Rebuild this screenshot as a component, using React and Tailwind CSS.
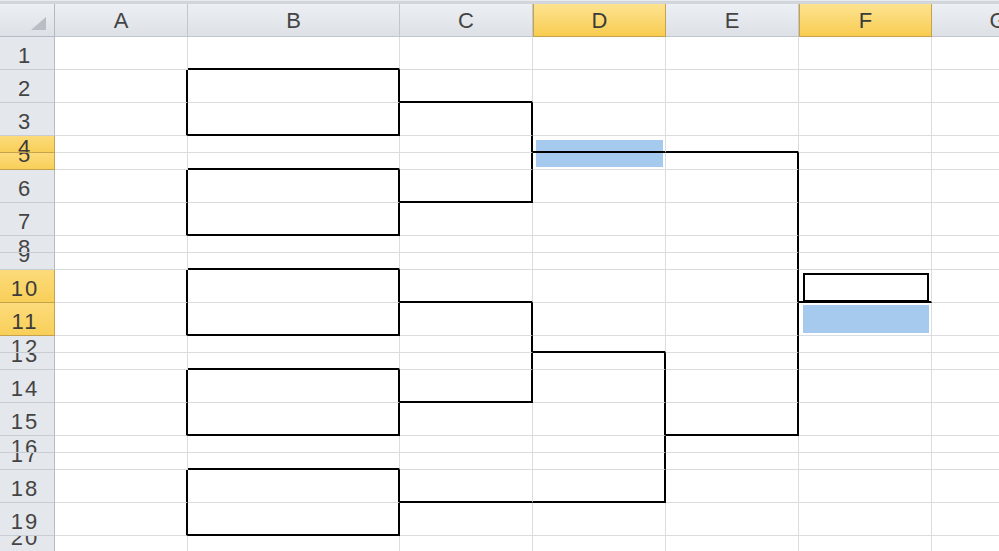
import React from "react";

const FONT = { fontFamily: '"Liberation Sans", Arial, sans-serif' };

const COLS = [
  { id: "A", w: "w-[133px]" },
  { id: "B", w: "w-[212px]" },
  { id: "C", w: "w-[133px]" },
  { id: "D", w: "w-[133px]", sel: true },
  { id: "E", w: "w-[133px]" },
  { id: "F", w: "w-[133px]", sel: true },
  { id: "G", w: "w-[133px]" },
];

// height, selected row header, how the number is clipped in short rows
const ROWS = [
  { n: 1, tall: true },
  { n: 2, tall: true },
  { n: 3, tall: true },
  { n: 4, sel: true, clip: "top" },
  { n: 5, sel: true, clip: "bottom" },
  { n: 6, tall: true },
  { n: 7, tall: true },
  { n: 8, clip: "top" },
  { n: 9, clip: "bottom" },
  { n: 10, tall: true, sel: true },
  { n: 11, tall: true, sel: true },
  { n: 12, clip: "top" },
  { n: 13, clip: "bottom" },
  { n: 14, tall: true },
  { n: 15, tall: true },
  { n: 16, clip: "top" },
  { n: 17, clip: "bottom" },
  { n: 18, tall: true },
  { n: 19, tall: true },
  { n: 20, clip: "bottom" },
];

// bracket lines drawn as cell borders: R = black right edge, B = black bottom edge
const BORDERS = {
  B1: "B",
  A2: "R", B2: "R", C2: "B",
  A3: "R", B3: "RB", C3: "R",
  C4: "R", D4: "B", E4: "B",
  B5: "B", C5: "R", E5: "R",
  A6: "R", B6: "R", C6: "RB", E6: "R",
  A7: "R", B7: "RB", E7: "R",
  E8: "R",
  B9: "B", E9: "R",
  A10: "R", B10: "R", C10: "B", E10: "R", F10: "B",
  A11: "R", B11: "RB", C11: "R", E11: "R",
  C12: "R", D12: "B", E12: "R",
  B13: "B", C13: "R", D13: "R", E13: "R",
  A14: "R", B14: "R", C14: "RB", D14: "R", E14: "R",
  A15: "R", B15: "RB", D15: "R", E15: "RB",
  D16: "R",
  B17: "B", D17: "R",
  A18: "R", B18: "R", C18: "B", D18: "RB",
  A19: "R", B19: "RB",
};

function CornerCell() {
  return (
    <div className="w-[55px] shrink-0 h-full flex items-end justify-end pr-[8px] pb-[6px] bg-linear-to-b from-[#eceff3] to-[#dde1e6] border-r border-b border-[#b3bac3]">
      <svg width="15" height="13" viewBox="0 0 15 13">
        <polygon points="15,0 15,13 0,13" fill="#b9bec5" />
      </svg>
    </div>
  );
}

function ColumnHeader({ col }) {
  const tone = col.sel
    ? "bg-linear-to-b from-[#fde38f] to-[#f8cc4f] border-l border-r border-b border-[#c7a24c] text-[#3b3b3b]"
    : "bg-linear-to-b from-[#eceff3] to-[#dde1e6] border-r border-b border-[#c1c7ce] text-[#444]";
  return (
    <div className={`${col.w} shrink-0 h-full flex justify-center ${tone}`}>
      <span className="mt-[6px] text-[22px] leading-none">{col.id}</span>
    </div>
  );
}

function RowHeader({ row }) {
  const tone = row.sel
    ? "bg-linear-to-b from-[#fcdb7a] to-[#f8cf58] border-r border-b border-[#c7a24c] text-[#3b3b3b]"
    : "bg-[#e4e7eb] border-r border-r-[#b3bac3] border-b border-b-[#c8cdd3] text-[#444]";
  const offset = row.tall
    ? "mt-[8px]"
    : row.clip === "top"
      ? "mt-[1px]"
      : "mt-[-9px]";
  return (
    <div className={`w-[55px] shrink-0 h-full overflow-hidden flex justify-center pr-[4px] ${tone}`}>
      <span className={`${offset} text-[22px] leading-none tracking-[2px]`}>
        {row.n}
      </span>
    </div>
  );
}

function CellContent({ id }) {
  if (id === "D4") {
    return <div className="flex-1 ml-[3px] mr-[2px] mt-[4px] bg-[#a6c9ee]" />;
  }
  if (id === "D5") {
    return <div className="flex-1 ml-[3px] mr-[2px] mb-[2px] bg-[#a6c9ee]" />;
  }
  if (id === "F10") {
    return (
      <div className="flex-1 ml-[4px] mr-[2px] mt-[3px] border-2 border-b-[1px] border-black bg-white" />
    );
  }
  if (id === "F11") {
    return <div className="flex-1 ml-[4px] mr-[2px] mt-[2px] mb-[2px] bg-[#a6c9ee]" />;
  }
  return null;
}

function Cell({ col, row }) {
  const id = `${col.id}${row.n}`;
  const mark = BORDERS[id] || "";
  const right = mark.includes("R")
    ? "border-r-2 border-r-black"
    : "border-r border-r-[#dadcdf]";
  const bottom = mark.includes("B")
    ? "border-b-2 border-b-black"
    : "border-b border-b-[#dadcdf]";
  return (
    <div className={`${col.w} shrink-0 h-full flex flex-col bg-white ${right} ${bottom}`}>
      <CellContent id={id} />
    </div>
  );
}

export default function App() {
  return (
    <div className="w-[999px] h-[551px] overflow-hidden bg-white select-none" style={FONT}>
      <div className="h-[4px] bg-[#d2d6db] border-t border-[#e9ecef]" />
      <div className="h-[33px] flex">
        <CornerCell />
        {COLS.map((col) => (
          <ColumnHeader key={col.id} col={col} />
        ))}
      </div>
      {ROWS.map((row) => (
        <div key={row.n} className={`flex ${row.tall ? "h-[33px]" : "h-[17px]"}`}>
          <RowHeader row={row} />
          {COLS.map((col) => (
            <Cell key={col.id} col={col} row={row} />
          ))}
        </div>
      ))}
    </div>
  );
}
